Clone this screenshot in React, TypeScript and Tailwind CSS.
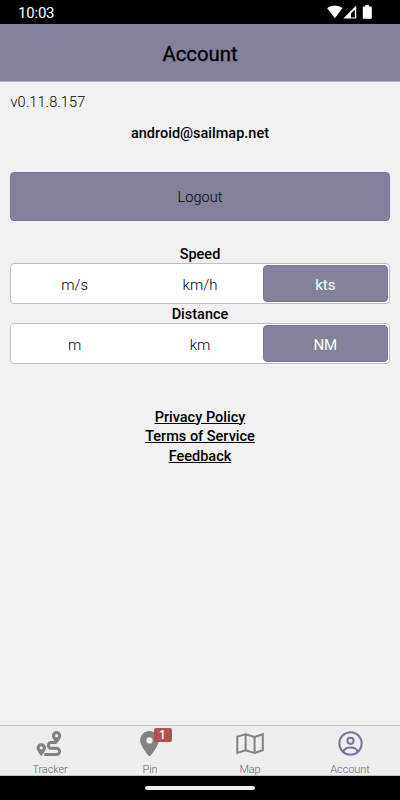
import { FaLocationDot } from 'react-icons/fa6'
import clsx from 'clsx'

function RouteIcon() {
  return (
    <svg width="26" height="25" viewBox="0 0 26 25" fill="currentColor" className="-ml-[2px]">
      <path
        d="M20.4 11.5H15.2a2.9 2.9 0 0 0 0 5.8H20.5a3.1 3.1 0 0 1 0 6.200H8.200"
        fill="none"
        stroke="currentColor"
        strokeWidth="3"
      />
      <path
        fillRule="evenodd"
        d="M5.3 25C3.900 23.400.6 19.300.6 16.900a4.700 4.700 0 0 1 9.400 0C10 19.300 6.700 23.400 5.300 25zM5.300 18.400a1.600 1.600 0 1 0 0-3.200 1.600 1.600 0 0 0 0 3.200z"
      />
      <path
        fillRule="evenodd"
        d="M20.600 12.700C19.200 11.100 15.900 7.200 15.900 4.700a4.700 4.700 0 0 1 9.400 0C25.300 7.200 22 11.100 20.600 12.700zM20.600 6.300a1.600 1.600 0 1 0 0-3.200 1.600 1.600 0 0 0 0 3.200z"
      />
    </svg>
  )
}

function MapIcon() {
  return (
    <svg width="28" height="25" viewBox="0 0 28 25" fill="none" stroke="currentColor" strokeWidth="2">
      <path d="M1.3 5.6L9.6 3.3L18.6 5.9L26.8 3.2V19.2L18.600 22L9.600 19.400L1.300 22Z" />
      <path d="M9.6 3.3V19.4M18.6 5.9V22" />
    </svg>
  )
}

function AccountIcon() {
  return (
    <svg width="25" height="25" viewBox="0 0 25 25" fill="none" stroke="currentColor" strokeWidth="2">
      <circle cx="12.5" cy="12.5" r="11.2" />
      <circle cx="12.5" cy="9.8" r="3.1" />
      <path d="M5.4 20.6C6.3 17.5 9.3 16.4 12.5 16.4S18.7 17.5 19.6 20.6" />
    </svg>
  )
}

const tabs = [
  { name: 'Tracker', icon: <RouteIcon /> },
  { name: 'Pin', icon: <FaLocationDot className="w-[25px] h-[25px] -ml-[1px]" />, badge: 1 },
  { name: 'Map', icon: <MapIcon /> },
  { name: 'Account', icon: <AccountIcon />, active: true },
]

const links = ['Privacy Policy', 'Terms of Service', 'Feedback']

function StatusBar() {
  return (
    <div className="flex items-center justify-between h-6 pl-[18px] pr-[27px] bg-black text-white">
      <span className="text-[15px] leading-6 pt-[2px] tracking-[-0.2px]">10:03</span>
      <svg width="46" height="24" viewBox="0 0 46 24" fill="currentColor">
        <path d="M0.2 8.2C4.2 4.6 11.4 4.6 15.4 8.2L7.8 18.2Z" />
        <path fillRule="evenodd" d="M29.2 5.6V18.6H16.4ZM27.9 9.4V17.6H24V13.4Z" />
        <path d="M38.2 5h3.8v1.6h2q.8 0 .8.8v10.6q0 .8-.8.8h-7.4q-.8 0-.8-.8V7.4q0-.8.8-.8h1.6z" />
      </svg>
    </div>
  )
}

interface UnitPickerProps {
  label: string
  options: string[]
  selected: string
}

function UnitPicker({ label, options, selected }: UnitPickerProps) {
  return (
    <div className="h-[60px]">
      <h2 className="pt-[2px] text-center text-[14.5px] leading-[17px] font-medium">{label}</h2>
      <div className="flex h-[41px] p-[1px] bg-white border border-[#bebebe] rounded-[4px]">
        {options.map((option) => (
          <button
            key={option}
            className={clsx(
              'flex-1 pt-[3px] rounded-[4px] border text-[15px]',
              option === selected
                ? 'bg-[#84829a] border-[#77759a] text-white'
                : 'border-transparent font-light'
            )}
          >
            {option}
          </button>
        ))}
      </div>
    </div>
  )
}

export default function App() {
  return (
    <div className="flex flex-col w-[400px] h-[800px] overflow-hidden bg-[#f1f1f1] text-black font-['Roboto',sans-serif]">
      <StatusBar />
      <header className="flex items-center justify-center h-[58px] pt-[3px] bg-[#84829a] border-b border-[#b5b4c5]">
        <h1 className="text-[20.3px] font-normal [-webkit-text-stroke:0.3px_black]">Account</h1>
      </header>

      <main className="flex-1 px-[10px] pt-[11px]">
        <p className="pl-[0.5px] text-[14.5px] leading-5 font-light tracking-[0.1px]">v0.11.8.157</p>
        <p className="mt-[10px] text-center text-[14.5px] leading-[21px] font-medium">android@sailmap.net</p>
        <button className="block w-full h-[49px] mt-[28px] pt-[3px] rounded-[4px] bg-[#84829a] border border-[#77759a] text-[14.5px] font-light tracking-[0.1px]">
          Logout
        </button>

        <div className="mt-[23px]">
          <UnitPicker label="Speed" options={['m/s', 'km/h', 'kts']} selected="kts" />
          <UnitPicker label="Distance" options={['m', 'km', 'NM']} selected="NM" />
        </div>

        <div className="flex flex-col items-center mt-[43.5px]">
          {links.map((link) => (
            <a key={link} href="#" className="text-[14.5px] leading-[19.5px] font-medium underline">
              {link}
            </a>
          ))}
        </div>
      </main>

      <nav className="grid grid-cols-4 h-[51px] bg-[#eeeeee] border-y border-[#c3c3c3]">
        {tabs.map((tab) => (
          <div
            key={tab.name}
            className={clsx(
              'flex flex-col items-center pt-[5px]',
              tab.active ? 'text-[#77759a]' : 'text-[#828282]'
            )}
          >
            <div className="relative">
              {tab.icon}
              {tab.badge && (
                <span className="absolute left-[15.5px] -top-[3px] w-[18px] h-[14px] rounded-[2px] bg-[#a95456] text-white text-[12px] leading-[15px] font-medium text-center">
                  {tab.badge}
                </span>
              )}
            </div>
            <span
              className={clsx(
                'mt-[8px] text-[11px] leading-3 font-light tracking-[-0.1px]',
                tab.active ? 'text-[#5f5d88]' : 'text-[#666666]'
              )}
            >
              {tab.name}
            </span>
          </div>
        ))}
      </nav>

      <div className="flex justify-center h-6 pt-[10px] bg-black">
        <div className="w-[110px] h-1 rounded-full bg-[#eeeeee]" />
      </div>
    </div>
  )
}
